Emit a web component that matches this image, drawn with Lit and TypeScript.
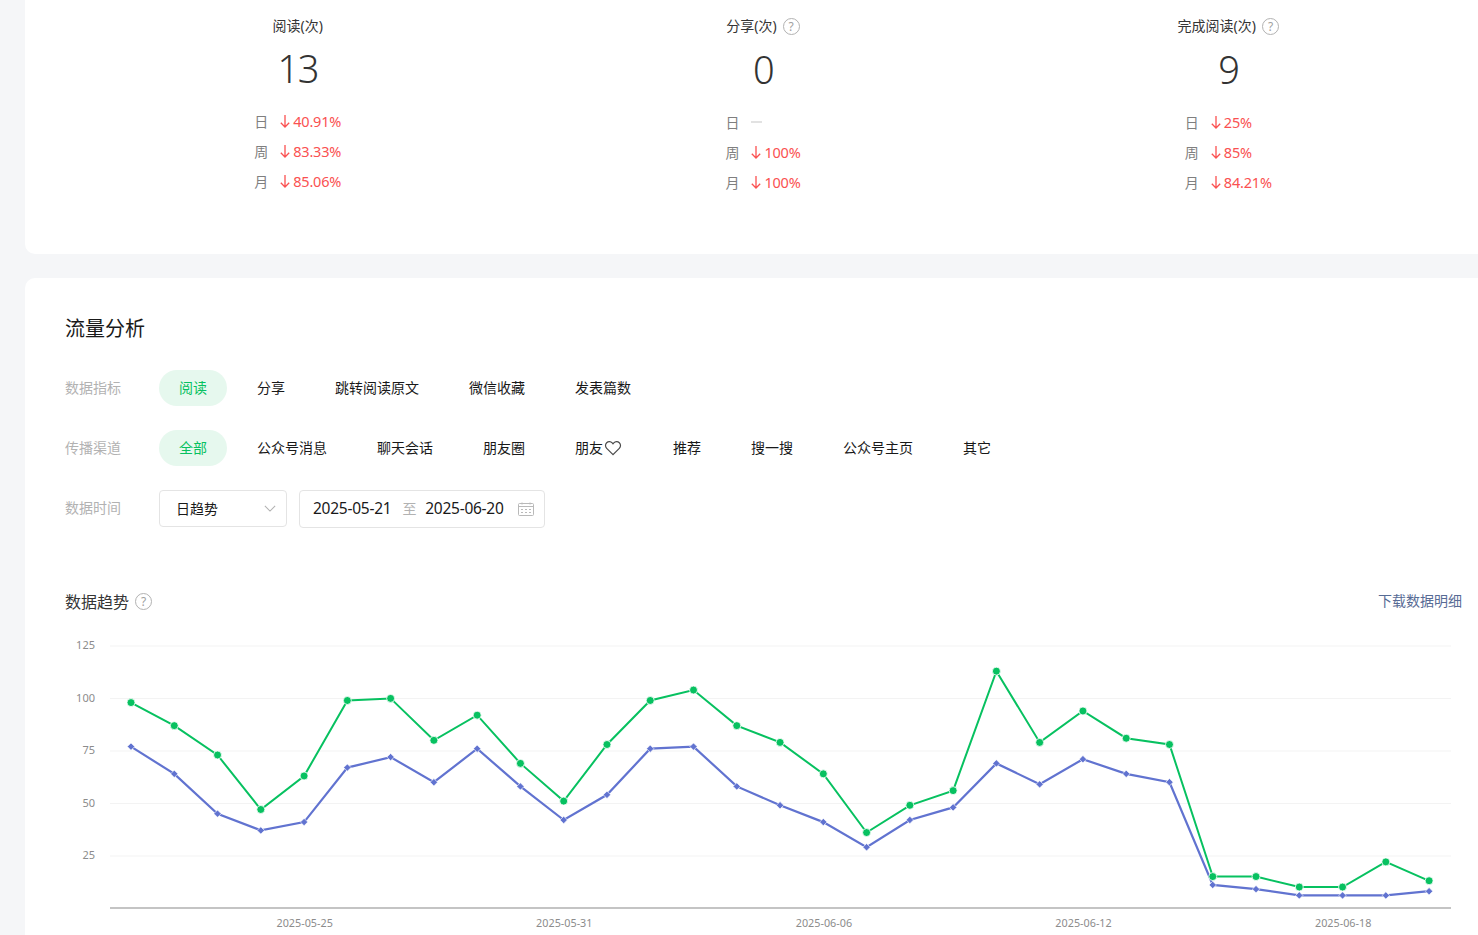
import { LitElement, html, css, svg } from "lit";
import { customElement } from "lit/decorators.js";

const GREEN = [98,87,73,47,63,99,100,80,92,69,51,78,99,104,87,79,64,36,49,56,113,79,94,81,78,15,15,10,10,22,13];
const BLUE = [77,64,45,37,41,67,72,60,76,58,42,54,76,77,58,49,41,29,42,48,69,59,71,64,60,11,9,6,6,6,8];
const X_LABELS: [number, string][] = [[4,"2025-05-25"],[10,"2025-05-31"],[16,"2025-06-06"],[22,"2025-06-12"],[28,"2025-06-18"]];
const px = (i: number) => 131 + i * 43.27;
const py = (v: number) => 908 - v * 2.096;
const pts = (d: number[]) => d.map((v, i) => `${px(i).toFixed(1)},${py(v).toFixed(1)}`).join(" ");

type Row = [string, string | null];
const STATS: { title: string; value: string; help: boolean; rows: Row[] }[] = [
  { title: "阅读(次)", value: "13", help: false, rows: [["日","40.91%"],["周","83.33%"],["月","85.06%"]] },
  { title: "分享(次)", value: "0", help: true, rows: [["日",null],["周","100%"],["月","100%"]] },
  { title: "完成阅读(次)", value: "9", help: true, rows: [["日","25%"],["周","85%"],["月","84.21%"]] },
];
const METRICS = ["阅读","分享","跳转阅读原文","微信收藏","发表篇数"];
const CHANNELS = ["全部","公众号消息","聊天会话","朋友圈","朋友♡","推荐","搜一搜","公众号主页","其它"];

@customElement("app-root")
export class AppRoot extends LitElement {
  static styles = css`
    :host { display: block; width: 1478px; height: 935px; overflow: hidden; background: #f5f6f8;
      font-family: "Noto Sans", "Noto Sans CJK SC", sans-serif; font-size: 14px; color: #353535; }
    .main { display: flex; flex-direction: column; gap: 24px; margin-left: 25px; }
    .card { background: #fff; padding: 0 16px 0 40px; }
    .top { height: 254px; box-sizing: border-box; padding-top: 16px; border-radius: 0 0 0 10px; }
    .stats { display: flex; align-items: flex-start; margin-right: 1px; }
    .stat { flex: 1; display: flex; flex-direction: column; align-items: center; }
    .stat-title { display: flex; align-items: flex-start; gap: 6px; line-height: 20px; color: #353535; }
    .help { box-sizing: border-box; width: 17px; height: 17px; border: 1px solid #b2b2b2; border-radius: 50%;
      color: #a0a0a0; font-size: 12px; line-height: 15px; text-align: center; margin: 2px 0; flex: none; }
    .value { font-size: 38px; letter-spacing: -1.5px; line-height: 50px; margin-top: 7px; color: #333; font-weight: 300; }
    .rows { display: flex; flex-direction: column; margin-top: 13px; }
    .row { display: flex; align-items: center; height: 30px; }
    .rlabel { width: 14px; color: #7f7f7f; margin-right: 11px; }
    .pct { color: #fa5151; display: flex; align-items: center; font-size: 14.5px; letter-spacing: -.2px; }
    .pct svg { display: block; margin-right: 2px; }
    .dash { width: 11px; height: 1.5px; background: #e2e2e2; margin-left: 1px; }
    .bottom { padding-top: 37px; border-radius: 10px 0 0 0; height: 657px; box-sizing: border-box; }
    h2 { margin: 0 0 27px; font-size: 20px; font-weight: 400; line-height: 28px; color: #191919; }
    .filter { display: flex; align-items: flex-start; margin-bottom: 24px; }
    .flabel { width: 94px; flex: none; color: #b2b2b2; line-height: 36px; }
    .opts { display: flex; gap: 10px; }
    .opt { height: 36px; line-height: 36px; padding: 0 20px; border-radius: 18px; color: #191919; display: flex; align-items: center; }
    .opt.on { background: #e6f8ee; color: #07c160; }
    .select { box-sizing: border-box; width: 128px; height: 37px; border: 1px solid #e4e4e4; border-radius: 4px;
      display: flex; align-items: center; justify-content: space-between; padding: 0 10px 2px 16px; color: #191919; margin-right: 12px; }
    .select svg { margin-top: 2px; }
    .range { box-sizing: border-box; width: 246px; height: 38px; border: 1px solid #e4e4e4; border-radius: 4px;
      display: flex; align-items: center; padding: 0 10px 2px 13px; color: #191919; font-size: 15.5px; letter-spacing: -.25px; }
    .range .to { color: #b2b2b2; font-size: 14px; margin: 0 9px 0 11px; }
    .range svg { margin-left: auto; margin-top: 2px; }
    .chart-head { display: flex; align-items: center; justify-content: space-between; margin-top: 61px; height: 24px; }
    .chart-title { display: flex; align-items: center; gap: 6px; font-size: 16px; color: #353535; }
    .chart-title .help { margin: 0; }
    .link { color: #576b95; padding-bottom: 2px; }
    .chart { display: block; margin-top: 17px; width: 1413px; height: 305px; }
    .ylab { font-size: 11px; fill: #8c8c8c; text-anchor: end; font-family: "Noto Sans", sans-serif; }
    .xlab { font-size: 10.8px; fill: #8c8c8c; text-anchor: middle; font-family: "Noto Sans", sans-serif; }
  `;

  private arrow() {
    return html`<svg width="12" height="14" viewBox="0 0 12 14" fill="none" stroke="#fa5151" stroke-width="1.3"><path d="M6 1v12M1.8 8.8 6 13l4.2-4.2"/></svg>`;
  }
  private heart() {
    return html`<svg width="20" height="18" viewBox="-.5 0 20 18" fill="none" stroke="#4a4a4a" stroke-width="1.2"><path d="M9.5 15.6 3.2 9.3C1.6 7.7 1.6 5.2 3.2 3.7 4.8 2.2 7.3 2.4 8.7 3.9l.8.9.8-.9c1.4-1.5 3.9-1.7 5.5-.2 1.6 1.5 1.6 4 0 5.6z"/></svg>`;
  }
  private opts(list: string[]) {
    return html`<div class="opts">${list.map((o, i) => html`<div class="opt ${i === 0 ? "on" : ""}">${o.endsWith("♡") ? html`${o.slice(0, -1)}${this.heart()}` : o}</div>`)}</div>`;
  }
  private chart() {
    return html`<svg class="chart" viewBox="65 630 1413 305">
      ${[[125,646],[100,698.5],[75,751],[50,803.5],[25,856]].map(([v, y]) => svg`
        <line x1="110" x2="1451" y1=${y} y2=${y} stroke="#f3f3f3" stroke-width="1"/>
        <text class="ylab" x="95" y=${y + 3}>${v}</text>`)}
      <line x1="110" x2="1451" y1="908" y2="908" stroke="#c4c4c4" stroke-width="2"/>
      ${X_LABELS.map(([i, t]) => svg`<text class="xlab" x=${px(i) + 0.6} y="927">${t}</text>`)}
      <polyline points=${pts(BLUE)} fill="none" stroke="#6173d0" stroke-width="2.2"/>
      ${BLUE.map((v, i) => svg`<rect x=${px(i) - 2.6} y=${py(v) - 2.6} width="5.2" height="5.2" fill="#6173d0" stroke="#fff" stroke-width=".6" transform="rotate(45 ${px(i)} ${py(v)})"/>`)}
      <polyline points=${pts(GREEN)} fill="none" stroke="#07c160" stroke-width="2"/>
      ${GREEN.map((v, i) => svg`<circle cx=${px(i)} cy=${py(v)} r="4" fill="#07c160" stroke="#fff" stroke-width=".8"/>`)}
    </svg>`;
  }

  render() {
    return html`<div class="main">
      <section class="card top">
        <div class="stats">
          ${STATS.map(s => html`<div class="stat">
            <div class="stat-title">${s.title}${s.help ? html`<span class="help">?</span>` : ""}</div>
            <div class="value">${s.value}</div>
            <div class="rows">
              ${s.rows.map(([l, v]) => html`<div class="row"><span class="rlabel">${l}</span>
                ${v ? html`<span class="pct">${this.arrow()}${v}</span>` : html`<span class="dash"></span>`}</div>`)}
            </div>
          </div>`)}
        </div>
      </section>
      <section class="card bottom">
        <h2>流量分析</h2>
        <div class="filter"><span class="flabel">数据指标</span>${this.opts(METRICS)}</div>
        <div class="filter"><span class="flabel">传播渠道</span>${this.opts(CHANNELS)}</div>
        <div class="filter">
          <span class="flabel">数据时间</span>
          <div class="select">日趋势
            <svg width="12" height="7" viewBox="0 0 14 8" fill="none" stroke="#b2b2b2" stroke-width="1.2"><path d="M1 1l6 6 6-6"/></svg>
          </div>
          <div class="range"><span>2025-05-21</span><span class="to">至</span><span>2025-06-20</span>
            <svg width="16" height="14" viewBox="0 0 16 14" fill="none" stroke="#b9b9b9"><rect x=".5" y="1.5" width="15" height="12" rx="1"/><path d="M.5 4.5h15"/><path d="M4 .5v2M12 .5v2" /><path d="M3 7.5h2M7 7.5h2M11 7.5h2M3 10.5h2M7 10.5h2M11 10.5h2" /></svg>
          </div>
        </div>
        <div class="chart-head">
          <div class="chart-title">数据趋势<span class="help">?</span></div>
          <span class="link">下载数据明细</span>
        </div>
        ${this.chart()}
      </section>
    </div>`;
  }
}
